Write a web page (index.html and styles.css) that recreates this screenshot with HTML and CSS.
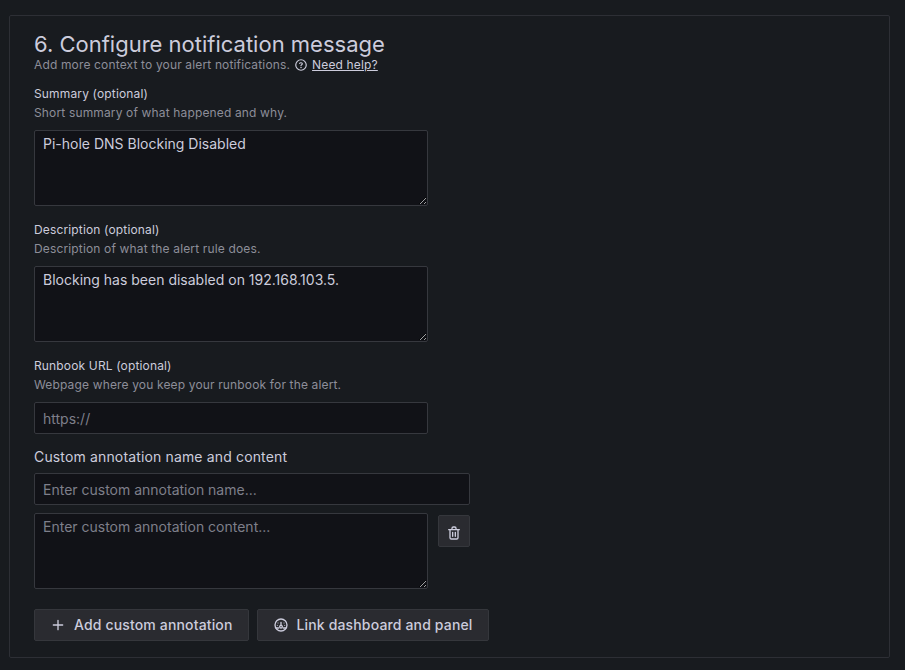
FILE: index.html
```
<!DOCTYPE html>
<html lang="en">
<head>
<meta charset="utf-8">
<title>Configure notification message</title>
<link rel="stylesheet" href="styles.css">
</head>
<body>
<section class="panel">
  <h3 class="title">6. Configure notification message</h3>
  <div class="intro">
    <span>Add more context to your alert notifications.</span>
    <svg class="help-icon" viewBox="0 0 24 24"><circle class="ring" cx="12" cy="12" r="9"/><path class="ring" d="M9.700 9.300C10.300 7.600 14.300 7.600 14.300 10C14.300 11.500 12 11.600 12 13"/><circle cx="12" cy="16.300" r="1.300"/></svg>
    <a class="help-link">Need help?</a>
  </div>

  <div class="field">
    <label class="label" for="summary">Summary (optional)</label>
    <p class="hint">Short summary of what happened and why.</p>
    <textarea id="summary" class="input area">Pi-hole DNS Blocking Disabled</textarea>
  </div>
  <div class="field">
    <label class="label" for="description">Description (optional)</label>
    <p class="hint">Description of what the alert rule does.</p>
    <textarea id="description" class="input area">Blocking has been disabled on 192.168.103.5.</textarea>
  </div>
  <div class="field field-url">
    <label class="label" for="runbook">Runbook URL (optional)</label>
    <p class="hint">Webpage where you keep your runbook for the alert.</p>
    <input id="runbook" class="input" placeholder="https://">
  </div>

  <div class="custom">
    <label class="custom-label" for="name">Custom annotation name and content</label>
    <input id="name" class="input wide" placeholder="Enter custom annotation name...">
    <div class="content-row">
      <textarea class="input area" placeholder="Enter custom annotation content..."></textarea>
      <button class="button delete" aria-label="Delete annotation">
        <svg class="icon" viewBox="0 0 24 24"><path d="M10,18a1,1,0,0,0,1-1V11a1,1,0,0,0-2,0v6A1,1,0,0,0,10,18ZM20,6H16V5a3,3,0,0,0-3-3H11A3,3,0,0,0,8,5V6H4A1,1,0,0,0,4,8H5V19a3,3,0,0,0,3,3h8a3,3,0,0,0,3-3V8h1a1,1,0,0,0,0-2ZM10,5a1,1,0,0,1,1-1h2a1,1,0,0,1,1,1V6H10Zm7,14a1,1,0,0,1-1,1H8a1,1,0,0,1-1-1V8H17Zm-3-1a1,1,0,0,0,1-1V11a1,1,0,0,0-2,0v6A1,1,0,0,0,14,18Z"/></svg>
      </button>
    </div>
  </div>

  <div class="actions">
    <button class="button">
      <svg class="icon" viewBox="0 0 24 24"><path d="M19,11H13V5a1,1,0,0,0-2,0v6H5a1,1,0,0,0,0,2h6v6a1,1,0,0,0,2,0V13h6a1,1,0,0,0,0-2Z"/></svg>
      <span>Add custom annotation</span>
    </button>
    <button class="button">
      <svg class="icon line" viewBox="0 0 24 24"><circle cx="12" cy="12" r="9"/><path d="M12 8V12.500M4.800 16.500H8.500M15.500 16.500H19.200"/><circle cx="12" cy="14.500" r="2"/><path class="ticks" d="M7.500 9v.1M16.500 9v.1M6.500 12.500v.1M17.500 12.500v.1"/></svg>
      <span>Link dashboard and panel</span>
    </button>
  </div>
</section>
</body>
</html>
```
FILE: styles.css
```
* { box-sizing: border-box; }

body {
  margin: 0;
  padding: 15px 15px 0 9px;
  background: #181b1f;
  color: #ccccdc;
  font: 400 14px/22px Inter, sans-serif;
  letter-spacing: 0.15px;
}

.panel {
  height: 643px;
  border: 1px solid #2d2f35;
  border-radius: 2px;
  padding: 16px 24px;
}

.title {
  margin: 0;
  font-size: 22px;
  font-weight: 400;
  line-height: 24px;
  letter-spacing: 0;
}

.intro {
  display: flex;
  align-items: center;
  height: 18px;
  margin-bottom: 12px;
  font-size: 12px;
  line-height: 18px;
  color: #8d8e99;
}

.help-icon {
  width: 14px;
  height: 14px;
  margin: 0 4px;
  fill: #ccccdc;
}

.ring {
  fill: none;
  stroke: #ccccdc;
  stroke-width: 2;
  stroke-linecap: round;
}

.help-link {
  color: #ccccdc;
  text-decoration: underline;
}

.field { margin-bottom: 16px; }

.label {
  display: block;
  font-size: 12px;
  font-weight: 400;
  line-height: 16px;
}

.hint {
  margin: 3px 0 9px;
  font-size: 12px;
  line-height: 16px;
  color: #8d8e99;
}

.input {
  display: block;
  width: 394px;
  height: 32px;
  padding: 0 8px;
  border: 1px solid #36383e;
  border-radius: 2px;
  outline: none;
  background: #111217;
  color: #ccccdc;
  font: inherit;
  letter-spacing: 0;
}

.input::placeholder { color: #7e7f8a; }

.area {
  height: 76px;
  padding: 2px 8px;
  resize: both;
}

.wide { width: 436px; }

.field-url { margin-bottom: 12px; }

.custom-label {
  display: block;
  margin-bottom: 5px;
}

.content-row {
  display: flex;
  align-items: flex-start;
  gap: 10px;
  margin-top: 8px;
}

.button {
  display: flex;
  align-items: center;
  height: 32px;
  gap: 8px;
  padding: 0 15px;
  border: 1px solid #35373c;
  border-radius: 2px;
  background: #2a2b30;
  color: #ccccdc;
  font: 500 14px/30px Inter, sans-serif;
  letter-spacing: 0.15px;
}

.delete {
  width: 32px;
  margin-top: 2px;
  padding: 4px 0 0;
  justify-content: center;
}

.icon {
  width: 16px;
  height: 16px;
  fill: currentColor;
}

.line {
  fill: none;
  stroke: currentColor;
  stroke-width: 2;
  stroke-linecap: round;
}

.ticks { stroke-width: 1.5; }

.actions {
  display: flex;
  gap: 8px;
  margin-top: 20px;
}
```
